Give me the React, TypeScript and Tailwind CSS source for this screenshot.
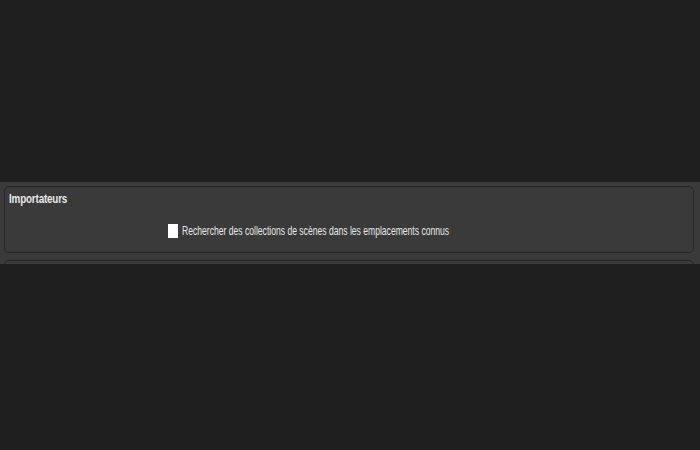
import React from "react";

const App = () => {
  return (
    <div
      className="h-[450px] w-[700px] bg-[#1f1f1f] flex flex-col overflow-hidden"
      style={{ fontFamily: '"Liberation Sans", Arial, sans-serif' }}
    >
      <div className="h-[182px]" />
      {/* Settings panel */}
      <div className="h-[82px] bg-[#3a3a3a] pl-[4px] pr-[6px] pt-[4px] flex flex-col gap-[7px] overflow-hidden">
        <div className="h-[67px] shrink-0 rounded-[5px] border border-[#252525] px-[4px] pt-[4px]">
          <div className="text-[12px] leading-[16px] text-[#e8e8e8] origin-left scale-x-[0.82] font-bold tracking-[-0.2px]">
            Importateurs
          </div>
          <div className="mt-[16px] flex items-center pl-[159px]">
            <span className="h-[14px] w-[10px] bg-white" />
            <span className="ml-[4px] text-[13px] leading-[16px] text-[#e8e8e8] origin-left scale-x-[0.66] whitespace-nowrap">
              Rechercher des collections de scènes dans les emplacements connus
            </span>
          </div>
        </div>
        <div className="h-[40px] shrink-0 rounded-[5px] border border-[#252525]" />
      </div>
    </div>
  );
};

export default App;
